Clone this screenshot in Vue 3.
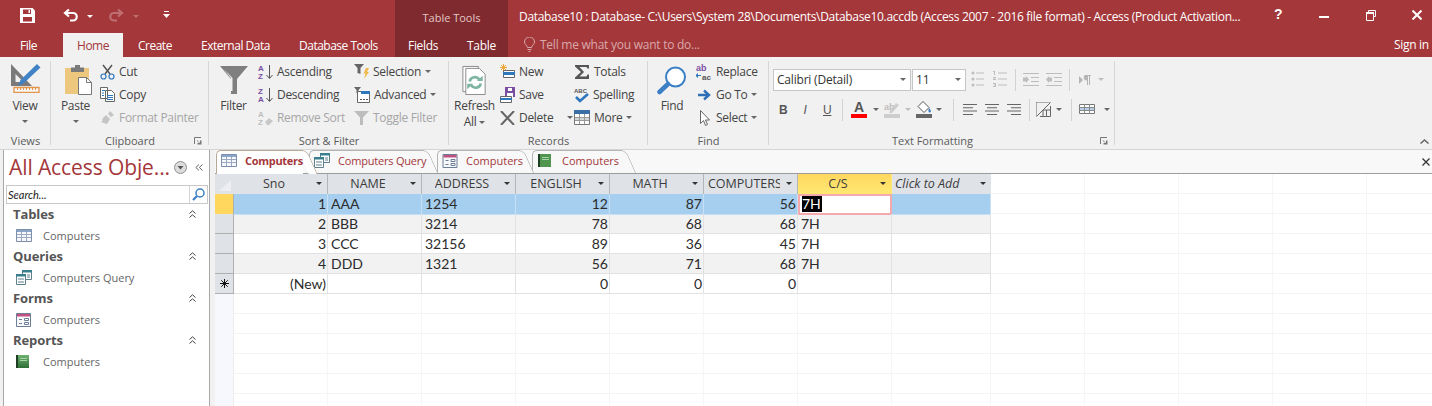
<script setup>
const columns = [
  { name: 'Sno' }, { name: 'NAME' }, { name: 'ADDRESS' }, { name: 'ENGLISH' }, { name: 'MATH' },
  { name: 'COMPUTERS', clip: true }, { name: 'C/S', active: true }, { name: 'Click to Add', add: true }
]
const rows = [
  { sno: 1, name: 'AAA', address: '1254', english: 12, math: 87, computers: 56, cs: '7H', current: true },
  { sno: 2, name: 'BBB', address: '3214', english: 78, math: 68, computers: 68, cs: '7H' },
  { sno: 3, name: 'CCC', address: '32156', english: 89, math: 36, computers: 45, cs: '7H' },
  { sno: 4, name: 'DDD', address: '1321', english: 56, math: 71, computers: 68, cs: '7H' }
]
</script>

<template>
  <div class="app">
    <header class="chrome">
      <div class="row-top">
        <div class="qat">
          <svg class="q-save" width="15" height="15" viewBox="0 0 15 15"><path fill="#fff" d="M0 0h12.500L15 2.500V15H0z"/><path fill="#a4373a" d="M3 1.500h8v4.500H3zM3 9h9v4.500H3z"/><path fill="#fff" d="M8.500 2h1.500v3H8.500z"/></svg>
          <svg class="q-undo" width="15" height="14" viewBox="0 0 15 14"><path fill="none" stroke="#fff" stroke-width="2.200" d="M6 1.500 2 5l4 3.500M2 5h8a3.600 3.600 0 0 1 0 7.500H7"/></svg>
          <i class="caret white q-c1"></i>
          <svg class="q-redo" width="15" height="14" viewBox="0 0 15 14"><path fill="none" stroke="#bf6f72" stroke-width="2.200" d="M9 1.500 13 5 9 8.500M13 5H5a3.600 3.600 0 0 0 0 7.500h3"/></svg>
          <i class="caret dim q-c2"></i>
          <svg class="q-more" width="7" height="8" viewBox="0 0 7 8"><path fill="#fff" d="M1 0h5v1H1zM0 3h7L3.500 7z"/></svg>
        </div>
        <div class="context context-title">Table Tools</div>
        <div class="doc-title">Database10 : Database- C:\Users\System 28\Documents\Database10.accdb (Access 2007 - 2016 file format) - Access (Product Activation...</div>
        <div class="win">
          <span class="help">?</span>
          <svg class="w-min" width="10" height="2" viewBox="0 0 10 2"><path fill="#fff" d="M0 0h10v2H0z"/></svg>
          <svg class="w-max" width="10" height="11" viewBox="0 0 10 11"><path fill="none" stroke="#fff" d="M2.500 2.500V.5h7v6H8M.5 2.500h7v8h-7z"/><path fill="#fff" d="M0 2h8v2H0z"/></svg>
          <svg class="w-close" width="10" height="10" viewBox="0 0 10 10"><path stroke="#fff" stroke-width="2" d="m.5.500 9 9m0-9-9 9"/></svg>
        </div>
      </div>
      <div class="row-tabs">
        <nav class="main-tabs">
          <span class="file">File</span>
          <span class="home">Home</span>
          <span class="create">Create</span>
          <span class="external">External Data</span>
          <span class="dbtools">Database Tools</span>
        </nav>
        <nav class="context context-tabs"><span>Fields</span><span>Table</span></nav>
        <div class="tell">
          <svg width="11" height="15" viewBox="0 0 11 15"><path fill="none" stroke="#d8a9ab" d="M3.500 10.500C3 8 .5 7.500.5 5a5 5 0 0 1 10 0c0 2.500-2.500 3-3 5.500zM3.500 12.500h4M4.500 14.500h2"/></svg>
          <span>Tell me what you want to do...</span>
        </div>
        <span class="signin">Sign in</span>
      </div>
    </header>

    <section class="ribbon">
      <div class="group g-views">
        <div class="group-body">
          <div class="big view">
            <svg width="32" height="30" viewBox="0 0 32 30"><path fill="#7a7a7a" fill-rule="evenodd" d="M2 1v22h21zM6.500 11v8h8z"/><path fill="#3f82c6" d="M28 1l3.500 3.500L15 20l-6 3 2.500-6z"/><path fill="#fff" d="M5 24.500h25v5H5z" opacity=".5"/><path fill="none" stroke="#e3954b" stroke-width="1.300" d="M5 24.500h25v5H5z"/><path stroke="#e3954b" d="M8.500 25v2M11.500 25v2M14.500 25v2M17.500 25v2M20.500 25v2M23.500 25v2M26.500 25v2"/></svg>
            <span class="big-label">View</span>
            <i class="caret big-caret"></i>
          </div>
        </div>
        <div class="group-label">Views</div>
      </div>

      <div class="group g-clip">
        <div class="group-body">
          <div class="big paste">
            <svg width="28" height="30" viewBox="0 0 28 30"><path fill="#eec77e" d="M1 3h24v26H1z"/><path fill="#7a7a7a" d="M7 2.500h4V0h5v2.500h4V7H7z"/><path fill="#fff" stroke="#777" d="M14.500 12.500h8l5 5v12h-13z"/><path fill="none" stroke="#777" d="M22.500 12.500v5h5"/></svg>
            <span class="big-label">Paste</span>
            <i class="caret big-caret"></i>
          </div>
          <div class="stack">
            <div class="small"><svg width="15" height="16" viewBox="0 0 15 16"><path stroke="#555" stroke-width="1.500" d="M3 1l7 9M12 1l-7 9"/><circle cx="3.500" cy="12.500" r="2.500" fill="none" stroke="#2f77bd" stroke-width="1.200"/><circle cx="11.500" cy="12.500" r="2.500" fill="none" stroke="#2f77bd" stroke-width="1.200"/></svg><span>Cut</span></div>
            <div class="small"><svg width="15" height="15" viewBox="0 0 15 15"><path fill="#fff" stroke="#666" d="M.5.500h7v11h-7zM5.500 3.500h6l3 3v8h-9z"/><path stroke="#2f77bd" d="M2 3.500h3M2 6h2M2 8.500h2M7 8.500h6M7 10.500h6M7 12.500h6"/></svg><span>Copy</span></div>
            <div class="small off"><svg width="15" height="15" viewBox="0 0 15 15"><path fill="#c4c4c4" d="M10 1l4 4-3 2-3-3zM6 5l4 4-3 5-6-2 2-2-1-1z"/></svg><span>Format Painter</span></div>
          </div>
        </div>
        <div class="group-label">Clipboard<svg class="launcher" width="8" height="8" viewBox="0 0 8 8"><path fill="none" stroke="#777" d="M.5 7V.5H7"/><path fill="#777" d="M3 3l3 3V3.500h1.500v4h-4V6h2L3 4z"/></svg></div>
      </div>

      <div class="group g-sort">
        <div class="group-body">
          <div class="big filter">
            <svg width="28" height="28" viewBox="0 0 28 28"><path fill="#7f7f7f" fill-rule="evenodd" d="M0 0h28L17 13v15h-6V13zM11 12v13h1.500V12L4 3z"/></svg>
            <span class="big-label">Filter</span>
          </div>
          <div class="stack s-sort1">
            <div class="small"><svg width="15" height="18" viewBox="0 0 15 18"><text x="0" y="8" class="az a">A</text><text x="0" y="16" class="az z">Z</text><path stroke="#555" fill="none" d="M11.500 2v13M8.500 12l3 3.500 3-3.500"/></svg><span>Ascending</span></div>
            <div class="small"><svg width="15" height="18" viewBox="0 0 15 18"><text x="0" y="8" class="az z">Z</text><text x="0" y="16" class="az a">A</text><path stroke="#555" fill="none" d="M11.500 2v13M8.500 12l3 3.500 3-3.500"/></svg><span>Descending</span></div>
            <div class="small off"><svg width="15" height="18" viewBox="0 0 15 18"><text x="0" y="8" class="az off-t">A</text><text x="0" y="16" class="az off-t">Z</text><path fill="#c8c8c8" d="M7 13l4-4 4 3-4 4H9z"/></svg><span>Remove Sort</span></div>
          </div>
          <div class="stack s-sort2">
            <div class="small"><svg width="15" height="15" viewBox="0 0 15 15"><path fill="#666" d="M0 0h10L6.500 4v6l-3-1V4z"/><path fill="#f0b94e" d="M12 4h3l-2 4h2l-5 7 1.500-5.500H9.500z"/></svg><span>Selection</span><i class="caret"></i></div>
            <div class="small"><svg width="16" height="16" viewBox="0 0 16 16"><path fill="#666" d="M0 0h7L4.500 3v4l-2-1V3z"/><path fill="#fff" stroke="#666" d="M3.500 4.500h12v11h-12z"/><path fill="#2f77bd" d="M7 4h9v3H7z"/><path fill="#555" d="M6 12h2v1H6zM9 12h2v1H9zM12 12h2v1h-2z"/></svg><span>Advanced</span><i class="caret"></i></div>
            <div class="small off"><svg width="15" height="15" viewBox="0 0 15 15"><path fill="#bdbdbd" d="M0 1h15L9 7.500V15H6V7.500z"/></svg><span>Toggle Filter</span></div>
          </div>
        </div>
        <div class="group-label">Sort &amp; Filter</div>
      </div>

      <div class="group g-rec">
        <div class="group-body">
          <div class="big refresh">
            <svg width="25" height="31" viewBox="0 0 25 31"><path fill="#fff" stroke="#8a8a8a" d="M.5 1.500h16v26H.5z"/><path fill="#fff" stroke="#8a8a8a" d="M3.500 3.500h14l6 6v21h-20z"/><path fill="none" stroke="#7db5a0" stroke-width="2.800" d="M7.500 17a5.500 5.500 0 0 1 10-2M19 19a5.500 5.500 0 0 1-10 2"/><path fill="#7db5a0" d="M15 16.500h6V11zM11 19.500H5V25z"/></svg>
            <span class="big-label">Refresh</span>
            <span class="big-label second">All<i class="caret"></i></span>
          </div>
          <div class="stack s-rec1">
            <div class="small"><svg width="15" height="15" viewBox="0 0 15 15"><path stroke="#eca63a" d="M3.500 0v7M0 3.500h7M1 1l5 5M6 1 1 6"/><path fill="#fff" stroke="#666" d="M3.500 6.500h11v7h-11z"/><path fill="#2f77bd" d="M3 8h12v3H3z"/></svg><span>New</span></div>
            <div class="small"><svg width="15" height="16" viewBox="0 0 15 16"><path fill="#7a4fa3" d="M5 0h10v10H5z"/><path fill="#fff" d="M8 1h4v3H8zM7 6h6v4H7z"/><path fill="#fff" stroke="#666" d="M.5 9.500h11v6H.5z"/><path fill="#2f77bd" d="M0 11h12v2H0z"/></svg><span>Save</span></div>
            <div class="small"><svg width="15" height="14" viewBox="0 0 15 14"><path stroke="#666" stroke-width="2" d="m1 0 13 14M14 0 1 14"/></svg><span>Delete</span><i class="caret del-caret"></i></div>
          </div>
          <div class="stack s-rec2">
            <div class="small"><svg width="16" height="14" viewBox="0 0 16 14"><path fill="#555" d="M1 0h14v3.500h-1.500L12.500 2H5.500L10 7 5.500 11.500h7l1-2H15V14H1v-1.500L7 7 1 1.500z"/></svg><span>Totals</span></div>
            <div class="small"><svg width="15" height="16" viewBox="0 0 15 16"><text x="0" y="6" class="abc">ABC</text><path fill="none" stroke="#2f77bd" stroke-width="2.600" d="m2 10 4 4 8-7"/></svg><span>Spelling</span></div>
            <div class="small"><svg width="16" height="15" viewBox="0 0 16 15"><path fill="#fff" stroke="#777" d="M.5.500h15v14H.5z"/><path fill="#3b6ea5" d="M0 0h16v4H0z"/><path fill="#d6d6d6" d="M1 8h14v2H1z"/><path stroke="#999" d="M5.500 4v10M10.500 4v10M1 7.500h14M1 10.500h14"/></svg><span>More</span><i class="caret"></i></div>
          </div>
        </div>
        <div class="group-label">Records</div>
      </div>

      <div class="group g-find">
        <div class="group-body">
          <div class="big find">
            <svg width="30" height="28" viewBox="0 0 30 28"><circle cx="18.500" cy="11" r="9.500" fill="#fff" stroke="#3b7fc4" stroke-width="2"/><path stroke="#3b7fc4" stroke-width="4.500" stroke-linecap="round" d="M11 18 2.500 26"/></svg>
            <span class="big-label">Find</span>
          </div>
          <div class="stack s-find">
            <div class="small"><svg width="16" height="18" viewBox="0 0 16 18"><text x="0" y="8" class="ab">ab</text><text x="6" y="17" class="ac">ac</text><path fill="#2f77bd" d="M0 12h3v-2l3 2.500-3 2.500v-2H0z" transform="matrix(-1 0 0 1 5 0)"/></svg><span>Replace</span></div>
            <div class="small"><svg width="16" height="14" viewBox="0 0 16 14"><path fill="none" stroke="#2f6fb5" stroke-width="2.400" d="M2 7h11M8 2.500 13 7l-5 4.500"/></svg><span>Go To</span><i class="caret"></i></div>
            <div class="small"><svg width="16" height="16" viewBox="0 0 16 16"><path fill="#fff" stroke="#666" d="M4.500.5v13l3-3 2 5 2-1-2-4.500h4z"/></svg><span>Select</span><i class="caret"></i></div>
          </div>
        </div>
        <div class="group-label">Find</div>
      </div>

      <div class="group g-text">
        <div class="group-body">
          <div class="fmt">
            <div class="fmt-row">
              <div class="combo font"><span>Calibri (Detail)</span><i class="caret"></i></div>
              <div class="combo size"><span>11</span><i class="caret"></i></div>
              <svg class="t-bul" width="36" height="18" viewBox="0 0 36 18"><g fill="#bdbdbd"><circle cx="2" cy="3" r="1.500"/><circle cx="2" cy="9" r="1.500"/><circle cx="2" cy="15" r="1.500"/><path d="M5 2.500h8v1H5zM5 8.500h8v1H5zM5 14.500h8v1H5zM27 2.500h9v1h-9zM27 8.500h9v1h-9zM27 14.500h9v1h-9z"/><path d="M22 1h2v4h-1V2h-1zM22 7h3v1l-2 1h2v1h-3V9l2-1h-2zM22 13h3v4h-3v-1h2v-.5h-1v-1h1V14h-2z"/></g></svg>
              <i class="sep s1"></i>
              <svg class="t-ind" width="39" height="13" viewBox="0 0 39 13"><g fill="#bdbdbd"><path d="M0 0h16v1H0zM8 4h8v1H8zM8 8h8v1H8zM0 12h16v1H0zM0 4.500h3V3l3 3.500L3 10V8.500H0zM23 0h16v1H23zM31 4h8v1h-8zM31 8h8v1h-8zM23 12h16v1H23zM29 4.500h-3V3l-3 3.500L26 10V8.500h3z"/></g></svg>
              <i class="sep s2"></i>
              <svg class="t-para" width="12" height="10" viewBox="0 0 12 10"><path fill="#b5b5b5" d="M0 1l4 4-4 4zM6 0h6v1h-1v9h-1V1H9v9H8V5.500a3 3 0 0 1-2-5.500z"/></svg>
              <i class="caret faint t-pc"></i>
            </div>
            <div class="fmt-row r2">
              <b class="t-b">B</b><em class="t-i">I</em><u class="t-u">U</u>
              <i class="sep s3"></i>
              <span class="t-a">A<i class="redbar"></i></span>
              <i class="caret t-c1"></i>
              <svg class="t-hl" width="16" height="20" viewBox="0 0 16 20"><text x="0" y="10" class="hl">ab</text><path fill="#c8c8c8" d="M6 11l6-8 3 2-7 8H5zM0 14h16v4H0z" opacity=".85"/></svg>
              <i class="caret faint t-c2"></i>
              <svg class="t-fill" width="16" height="17" viewBox="0 0 16 17"><path fill="#fff" stroke="#555" d="M7 .5l6 6-5 5-6-6z"/><path fill="#2f77bd" d="M13 7c2 2 2.500 4 1 4.500s-2-2-1-4.500z"/><path fill="#666" d="M0 13h16v4H0z"/></svg>
              <i class="caret t-c3"></i>
              <i class="sep s4"></i>
              <svg class="t-al" width="58" height="11" viewBox="0 0 58 11"><path fill="#666" d="M0 0h14v1H0zM0 3.300h10v1H0zM0 6.600h14v1H0zM0 9.900h10v1H0zM22 0h14v1H22zM24 3.300h10v1H24zM22 6.600h14v1H22zM24 9.900h10v1H24zM44 0h14v1H44zM48 3.300h10v1H48zM44 6.600h14v1H44zM48 9.900h10v1H48z"/></svg>
              <i class="sep s5"></i>
              <svg class="t-grid" width="15" height="15" viewBox="0 0 15 15"><path fill="none" stroke="#666" stroke-dasharray="1 1" d="M.5.500h14M.5.500v14"/><path fill="none" stroke="#666" d="M.5 14.500 14.500.5M14.500 4v10.500H4M7 14V8h7M10.500 8v6"/></svg>
              <i class="caret t-c4"></i>
              <i class="sep s6"></i>
              <svg class="t-tb" width="16" height="10" viewBox="0 0 16 10"><path fill="#fff" stroke="#777" d="M.5.500h15v9H.5z"/><path fill="#b7cfe8" d="M1 4h14v2H1z"/><path stroke="#888" d="M5.500 0v10M10.500 0v10M0 3.500h16M0 6.500h16"/></svg>
              <i class="caret t-c5"></i>
            </div>
          </div>
        </div>
        <div class="group-label tf-label">Text Formatting<svg class="launcher" width="8" height="8" viewBox="0 0 8 8"><path fill="none" stroke="#777" d="M.5 7V.5H7"/><path fill="#777" d="M3 3l3 3V3.500h1.500v4h-4V6h2L3 4z"/></svg></div>
      </div>

      <svg class="collapse" width="9" height="5" viewBox="0 0 9 5"><path fill="none" stroke="#666" stroke-width="1.500" d="M.5 4.500l4-3.500 4 3.500"/></svg>
    </section>

    <main class="work">
      <aside class="nav">
        <div class="nav-head">
          <span class="nav-title">All Access Obje...</span>
          <svg class="nav-drop" width="13" height="13" viewBox="0 0 13 13"><circle cx="6.500" cy="6.500" r="6" fill="#dcdcdc" stroke="#8f8f8f"/><path fill="#555" d="M3.500 5h6l-3 3.500z"/></svg>
          <svg class="nav-shut" width="8" height="7" viewBox="0 0 8 7"><path fill="none" stroke="#666" d="M4 .5.800 3.500 4 6.500M7.500.5 4.300 3.500l3.200 3"/></svg>
        </div>
        <div class="search">
          <span>Search...</span>
          <div class="search-btn"><svg width="13" height="13" viewBox="0 0 13 13"><circle cx="8" cy="5" r="4" fill="none" stroke="#3b7fc4" stroke-width="1.500"/><path stroke="#3b7fc4" stroke-width="2.200" d="M5 8 1 12"/></svg></div>
        </div>

        <div class="nav-group"><b>Tables</b><svg class="chev" width="7" height="8" viewBox="0 0 7 8"><path fill="none" stroke="#444" d="M.5 3.500 3.500.8l3 2.700M.5 7.500l3-2.700 3 2.700"/></svg></div>
        <div class="nav-item">
          <svg width="16" height="13" viewBox="0 0 16 13"><path fill="#f5f7fb" stroke="#7d8fa8" d="M.5.500h15v12H.5z"/><path fill="#8aa5c8" d="M1 1h14v2H1z"/><path stroke="#9aa9bf" d="M5.500 3v9M10.500 3v9M1 5.500h14M1 8.500h14"/></svg>
          <span>Computers</span>
        </div>
        <div class="nav-group"><b>Queries</b><svg class="chev" width="7" height="8" viewBox="0 0 7 8"><path fill="none" stroke="#444" d="M.5 3.500 3.500.8l3 2.700M.5 7.500l3-2.700 3 2.700"/></svg></div>
        <div class="nav-item">
          <svg width="16" height="15" viewBox="0 0 16 15"><path fill="#fff" stroke="#5f7f8f" d="M6.500.5h9v9h-9z"/><path fill="#3a7f8e" d="M6 0h10v2.500H6z"/><path fill="#fff" stroke="#5f7f8f" d="M.5 4.500h9v10h-9z"/><path fill="#3a7f8e" d="M0 4h10v2.500H0z"/><path stroke="#5f7f8f" d="M2 9h6M2 12h6M11 5h3M11 7h3"/></svg>
          <span>Computers Query</span>
        </div>
        <div class="nav-group"><b>Forms</b><svg class="chev" width="7" height="8" viewBox="0 0 7 8"><path fill="none" stroke="#444" d="M.5 3.500 3.500.8l3 2.700M.5 7.500l3-2.700 3 2.700"/></svg></div>
        <div class="nav-item">
          <svg width="15" height="14" viewBox="0 0 15 14"><path fill="#f7f8fb" stroke="#6d7f96" d="M.5.500h14v13H.5z"/><path fill="#c0507f" d="M1 1h13v2.500H1z"/><path stroke="#6d7f96" d="M3 6.500h3M3 10.500h3"/><path fill="#fff" stroke="#6d7f96" d="M8.500 5.500h4v2h-4zM8.500 9.500h4v2h-4z"/></svg>
          <span>Computers</span>
        </div>
        <div class="nav-group"><b>Reports</b><svg class="chev" width="7" height="8" viewBox="0 0 7 8"><path fill="none" stroke="#444" d="M.5 3.500 3.500.8l3 2.700M.5 7.500l3-2.700 3 2.700"/></svg></div>
        <div class="nav-item">
          <svg width="13" height="13" viewBox="0 0 13 13"><defs><linearGradient id="rep" x1="0" x2="0" y1="0" y2="1"><stop offset="0" stop-color="#6fb26f"/><stop offset="1" stop-color="#2f6e37"/></linearGradient></defs><path fill="url(#rep)" d="M0 0h13v13H0z"/><path fill="#1e3d22" d="M0 0h2v13H0z"/><path fill="#a6d4a6" d="M4 3h7v1H4zM4 5h7v1H4z"/></svg>
          <span>Computers</span>
        </div>
      </aside>

      <div class="doc">
        <div class="doc-tabs">
          <div class="tab active t1">
            <svg width="16" height="13" viewBox="0 0 16 13"><path fill="#f5f7fb" stroke="#7d8fa8" d="M.5.500h15v12H.5z"/><path fill="#8aa5c8" d="M1 1h14v2H1z"/><path stroke="#9aa9bf" d="M5.500 3v9M10.500 3v9M1 5.500h14M1 8.500h14"/></svg>
            <span>Computers</span>
          </div>
          <div class="tab t2">
            <svg width="16" height="15" viewBox="0 0 16 15"><path fill="#fff" stroke="#5f7f8f" d="M6.500.5h9v9h-9z"/><path fill="#3a7f8e" d="M6 0h10v2.500H6z"/><path fill="#fff" stroke="#5f7f8f" d="M.5 4.500h9v10h-9z"/><path fill="#3a7f8e" d="M0 4h10v2.500H0z"/><path stroke="#5f7f8f" d="M2 9h6M2 12h6M11 5h3M11 7h3"/></svg>
            <span>Computers Query</span>
          </div>
          <div class="tab t3">
            <svg width="16" height="14" viewBox="0 0 15 14"><path fill="#f7f8fb" stroke="#6d7f96" d="M.5.500h14v13H.5z"/><path fill="#c0507f" d="M1 1h13v2.500H1z"/><path stroke="#6d7f96" d="M3 6.500h3M3 10.500h3"/><path fill="#fff" stroke="#6d7f96" d="M8.500 5.500h4v2h-4zM8.500 9.500h4v2h-4z"/></svg>
            <span>Computers</span>
          </div>
          <div class="tab t4">
            <svg width="13" height="13" viewBox="0 0 13 13"><path fill="#4f9550" d="M0 0h13v13H0z"/><path fill="#1e3d22" d="M0 0h2v13H0z"/><path fill="#a6d4a6" d="M4 3h7v1H4zM4 5h7v1H4z"/></svg>
            <span>Computers</span>
          </div>
          <svg class="doc-close" width="8" height="8" viewBox="0 0 8 8"><path stroke="#333" stroke-width="1.300" d="m.5.500 7 7m0-7-7 7"/></svg>
        </div>

        <div class="sheet">
          <div class="grid-row head">
            <div class="sel corner"><svg width="17" height="17" viewBox="0 0 17 17"><path fill="#eceef1" d="M3 15 15 4v11z"/></svg></div>
            <div v-for="c in columns" :key="c.name" class="hcell" :class="{ on: c.active, add: c.add }">
              <span class="hname" :class="{ clip: c.clip }">{{ c.name }}</span>
              <i class="caret dark"></i>
            </div>
          </div>
          <div v-for="(r, i) in rows" :key="r.sno" class="grid-row data" :class="{ current: r.current, alt: i % 2 === 1 }">
            <div class="sel"></div>
            <div class="cell num">{{ r.sno }}</div>
            <div class="cell">{{ r.name }}</div>
            <div class="cell">{{ r.address }}</div>
            <div class="cell num">{{ r.english }}</div>
            <div class="cell num">{{ r.math }}</div>
            <div class="cell num">{{ r.computers }}</div>
            <div class="cell cs"><span>{{ r.cs }}</span></div>
            <div class="cell"></div>
          </div>
          <div class="grid-row data newrow">
            <div class="sel"><svg width="9" height="9" viewBox="0 0 9 9"><path stroke="#111" d="M4.500 0v9M0 4.500h9M1.300 1.300l6.400 6.400M7.700 1.300 1.300 7.700"/></svg></div>
            <div class="cell num">(New)</div>
            <div class="cell"></div>
            <div class="cell"></div>
            <div class="cell num">0</div>
            <div class="cell num">0</div>
            <div class="cell num">0</div>
            <div class="cell"></div>
            <div class="cell"></div>
          </div>
        </div>
      </div>
    </main>
  </div>
</template>

<style>
html, body { margin: 0; background: #fff; }
</style>

<style scoped>
.app { width: 1432px; height: 406px; overflow: hidden; font-family: "Open Sans", "Noto Sans", sans-serif; font-size: 12px; letter-spacing: -.3px; color: #444; display: flex; flex-direction: column; }
.chrome { background: #a4373a; color: #fff; height: 57px; flex: none; }
.row-top { height: 32px; display: flex; }
.row-tabs { height: 25px; display: flex; }
.qat { width: 395px; flex: none; display: flex; align-items: center; }
.q-save { margin-left: 20px; margin-top: -1px; }
.q-undo { margin-left: 28px; margin-top: -2px; }
.q-c1 { margin-left: 9px; }
.q-redo { margin-left: 16px; margin-top: -2px; }
.q-c2 { margin-left: 9px; }
.q-more { margin-left: 24px; margin-top: -2px; }
.context { width: 113px; flex: none; background: #7f2a2e; }
.context-title { line-height: 35px; text-align: center; color: #e3c6c7; font-size: 11px; letter-spacing: 0; }
.doc-title { margin-left: 11px; line-height: 33px; white-space: nowrap; width: 740px; flex: none; letter-spacing: -.31px; }
.win { position: relative; flex: 1; }
.help { position: absolute; left: 15px; top: 6px; font-weight: 700; font-size: 14px; font-family: "Liberation Sans", sans-serif; }
.w-min { position: absolute; left: 60px; top: 16px; }
.w-max { position: absolute; left: 107px; top: 10px; }
.w-close { position: absolute; left: 153px; top: 10px; }
.main-tabs { width: 395px; flex: none; display: flex; line-height: 27px; white-space: nowrap; letter-spacing: -.5px; }
.file { margin-left: 20px; width: 43px; }
.home { width: 60px; background: #f1f1f1; color: #a4373a; text-align: center; margin-top: 1px; line-height: 26px; }
.create { margin-left: 15px; width: 63px; }
.external { width: 98px; }
.context-tabs { display: flex; line-height: 27px; }
.context-tabs span:first-child { margin-left: 13px; width: 59px; }
.tell { display: flex; align-items: center; margin-left: 16px; color: #d8a9ab; width: 870px; flex: none; gap: 5px; letter-spacing: -.25px; }
.signin { line-height: 26px; white-space: nowrap; }
.caret { display: inline-block; width: 0; height: 0; border-left: 3px solid transparent; border-right: 3px solid transparent; border-top: 3px solid #666; vertical-align: middle; }
.caret.white { border-top-color: #fff; }
.caret.dim { border-top-color: #bf6f72; }
.caret.faint { border-top-color: #bdbdbd; }
.caret.dark { border-top-color: #333; }

.ribbon { height: 93px; flex: none; background: #f1f1f1; border-bottom: 1px solid #d4d4d4; box-sizing: border-box; display: flex; position: relative; }
.group { display: flex; flex-direction: column; flex: none; box-sizing: border-box; padding-top: 3px; position: relative; }
.group::after { content: ""; position: absolute; right: 0; top: 4px; height: 84px; width: 1px; background: #d6d6d6; }
.group-body { display: flex; height: 73px; }
.group-label { height: 15px; text-align: center; line-height: 16px; font-size: 11px; letter-spacing: 0; color: #5a5a5a; position: relative; }
.tf-label { padding-right: 19px; }
.launcher { position: absolute; right: 7px; top: 4px; }
.big { display: flex; flex-direction: column; align-items: center; flex: none; }
.big > svg { height: 30px; margin-top: 5px; flex: none; }
.view > svg { margin-top: 3px; margin-bottom: 2px; }
.paste > svg { margin-left: 4px; }
.big-label { line-height: 16px; margin-top: 3px; white-space: nowrap; }
.big-label.second { margin-top: 0; }
.big-label .caret { margin-left: 3px; }
.big-caret { margin-top: 6px; }
.g-views { width: 51px; }
.g-views .big { width: 50px; }
.g-clip { width: 158px; }
.paste { width: 49px; }
.g-sort { width: 240px; }
.filter { width: 49px; }
.s-sort1 { width: 96px; }
.g-rec { width: 199px; }
.refresh { width: 51px; }
.s-rec1 { width: 74px; }
.g-find { width: 121px; }
.find { width: 48px; }
.g-text { width: 346px; }
.stack { display: flex; flex-direction: column; flex: none; }
.small { height: 23px; display: flex; align-items: center; gap: 4px; white-space: nowrap; }
.small svg { flex: none; }
.off { color: #a6a6a6; }
.del-caret { margin-left: 10px; }
.az { font: 700 8px "Liberation Sans", sans-serif; letter-spacing: 0; }
.az.a { fill: #7a4fa3; }
.az.z { fill: #7a4fa3; }
.az.off-t { fill: #bdbdbd; }
.abc { font: 700 6px "Liberation Sans", sans-serif; fill: #555; letter-spacing: 0; }
.ab { font: 700 9px "Liberation Sans", sans-serif; fill: #7a4fa3; letter-spacing: 0; }
.ac { font: 700 8px "Liberation Sans", sans-serif; fill: #555; letter-spacing: 0; }
.hl { font: 700 9px "Liberation Sans", sans-serif; fill: #bdbdbd; letter-spacing: 0; }

.fmt { display: flex; flex-direction: column; padding: 8px 0 0 4px; }
.fmt-row { display: flex; align-items: center; height: 23px; position: relative; width: 340px; }
.r2 { margin-top: 7px; }
.combo { height: 22px; box-sizing: border-box; background: #fff; border: 1px solid #c6c6c6; display: flex; align-items: center; justify-content: space-between; padding: 0 4px 0 3px; font-size: 12px; letter-spacing: -.2px; color: #333; flex: none; }
.font { width: 138px; }
.size { width: 54px; margin-left: 1px; }
.t-bul { margin-left: 5px; margin-top: -1px; }
.sep { width: 1px; height: 22px; background: #d2d2d2; flex: none; display: block; }
.s1 { margin-left: 8px; }
.t-ind { margin-left: 7px; }
.s2 { margin-left: 7px; }
.t-para { margin-left: 9px; }
.t-pc { margin-left: 7px; }
.r2 b, .r2 em, .r2 u { font-family: "Liberation Sans", sans-serif; font-size: 12px; color: #555; width: 8px; text-align: center; }
.t-b { margin-left: 6px; }
.t-i { margin-left: 14px; }
.t-u { margin-left: 14px; }
.s3 { margin-left: 11px; }
.t-a { margin-left: 8px; position: relative; width: 16px; text-align: center; font: 700 14px/14px "Liberation Sans", sans-serif; margin-top: -5px; color: #555; }
.redbar { position: absolute; left: 0; top: 14px; width: 16px; height: 4px; background: #f00; }
.t-c1 { margin-left: 6px; }
.t-hl { margin-left: 5px; }
.t-c2 { margin-left: 5px; }
.t-fill { margin-left: 5px; }
.t-c3 { margin-left: 4px; }
.s4 { margin-left: 11px; }
.t-al { margin-left: 9px; }
.s5 { margin-left: 8px; }
.t-grid { margin-left: 6px; }
.t-c4 { margin-left: 5px; }
.s6 { margin-left: 9px; }
.t-tb { margin-left: 7px; margin-top: -2px; }
.t-c5 { margin-left: 9px; }
.collapse { position: absolute; right: 3px; bottom: 5px; }

.work { flex: 1; display: flex; min-height: 0; background: #f1f1f1; }
.nav { width: 205px; margin-left: 3px; flex: none; background: #fff; border-left: 1px solid #a8a8a8; border-right: 1px solid #a8a8a8; color: #555; }
.nav-head { height: 35px; display: flex; align-items: center; position: relative; }
.nav-title { color: #a4373a; font-size: 21px; letter-spacing: -.1px; margin-left: 5px; white-space: nowrap; line-height: 35px; }
.nav-drop { position: absolute; left: 170px; top: 11px; }
.nav-shut { position: absolute; left: 191px; top: 14px; }
.search { height: 17px; margin: 0 2px; border: 1px solid #c8c8c8; display: flex; align-items: center; justify-content: space-between; font-family: Lato, sans-serif; font-style: italic; font-size: 11px; letter-spacing: 0; color: #222; padding: 0 0 0 1px; width: 199px; }
.search-btn { width: 17px; height: 17px; border-left: 1px solid #d4d4d4; display: flex; align-items: center; justify-content: center; }
.nav-group { height: 21px; box-sizing: border-box; padding: 0 13px 2px 9px; display: flex; align-items: center; justify-content: space-between; }
.nav-group b { font-weight: 700; font-size: 13px; letter-spacing: -.1px; color: #555; }
.chev { flex: none; }
.nav-item { height: 21px; display: flex; align-items: center; font-size: 11px; letter-spacing: 0; color: #666; padding-left: 12px; }
.nav-item svg { flex: none; }
.nav-item span { position: absolute; margin-left: 27px; }
.doc { margin-left: 5px; flex: 1; min-width: 0; display: flex; flex-direction: column; background: #fff; }
.doc-tabs { height: 24px; box-sizing: border-box; background: #f8f8f8; border-bottom: 1px solid #9c9c9c; display: flex; align-items: flex-end; padding-left: 1px; position: relative; color: #a4373a; font-size: 11px; letter-spacing: 0; }
.tab { height: 23px; position: relative; display: flex; align-items: center; gap: 8px; padding: 0 0 3px 4px; box-sizing: border-box; border: 1px solid #b4b4b4; border-bottom: 0; border-right: 0; border-radius: 5px 0 0 0; white-space: nowrap; background: #f8f8f8; }
.tab svg { flex: none; }
.tab::after { content: ""; position: absolute; top: -1px; right: -4px; bottom: 0; width: 8px; background: inherit; border: 1px solid #b4b4b4; border-left: 0; border-bottom: 0; border-radius: 0 6px 0 0; transform: skewX(24deg); transform-origin: top; }
.tab > * { position: relative; z-index: 1; }
.active { background: #fff; font-weight: 700; letter-spacing: -.3px; z-index: 4; height: 24px; margin-bottom: -1px; padding-bottom: 4px; border-color: #b9a897; }
.active::after { border-color: #b9a897; }
.t1 { width: 87px; }
.t2 { width: 115px; margin-left: 6px; letter-spacing: -.2px; z-index: 3; }
.t3 { width: 83px; margin-left: 13px; z-index: 2; }
.t4 { width: 90px; margin-left: 12px; gap: 11px; padding-left: 5px; z-index: 1; }
.doc-close { position: absolute; right: 2px; top: 8px; }

.sheet { flex: 1; min-height: 0; font-family: Lato, sans-serif; font-size: 14px; letter-spacing: 0; color: #2b2b2b;
  background-color: #fff;
  background-image:
    linear-gradient(90deg, #f6f8fd 18px, #ececec 18px, #ececec 19px, transparent 19px),
    repeating-linear-gradient(90deg, transparent 0 93px, #f6f6f6 93px 94px),
    repeating-linear-gradient(90deg, #f6f6f6 0 1px, transparent 1px 94px),
    repeating-linear-gradient(180deg, transparent 0 19px, #f4f4f4 19px 20px);
  background-position: 0 0, 19px 0, 775px 0, 0 0;
  background-size: 19px 100%, 700px 100%, 100% 100%, 100% 100%;
  background-repeat: no-repeat, no-repeat, no-repeat, repeat;
}
.grid-row { display: grid; grid-template-columns: 19px repeat(7, 94px) 99px; height: 20px; width: 776px; }
.head { background: #dfe2e6; height: 20px; }
.sel { background: #dfe2e6; border-right: 1px solid #b0b0b0; border-bottom: 1px solid #b0b0b0; box-sizing: border-box; display: flex; align-items: center; justify-content: center; }
.corner { border: 0; padding: 0; overflow: hidden; border-right: 1px solid #dfe2e6; }
.hcell { position: relative; box-sizing: border-box; border-right: 1px solid #b4b7ba; height: 20px; font-family: "Open Sans", sans-serif; font-size: 12.5px; line-height: 19px; text-align: center; padding-right: 13px; color: #3c3c3c; background: #dfe2e6; white-space: nowrap; }
.hcell .caret { position: absolute; right: 5px; top: 8px; }
.hname { display: inline-block; overflow: hidden; vertical-align: top; }
.hname.clip { width: 72px; text-align: left; margin-left: 0; }
.hcell.on { background: linear-gradient(#ffd75e, #ffe873); border-right-color: #ffe873; }
.hcell.add { font-style: italic; text-align: left; padding-left: 3px; border-right: 0; }
.data { background: #fff; }
.data.alt { background: #f2f2f2; }
.data.current { background: #a6cfef; }
.current .sel { background: #ffd75e; }
.cell { box-sizing: border-box; border-right: 1px solid #e2e2e2; border-bottom: 1px solid #e2e2e2; padding: 0 1px 0 3px; line-height: 20px; white-space: nowrap; overflow: hidden; }
.num { text-align: right; }
.current .cell { border-color: #c8e0f4; }
.current .cs { background: #fff; border: 2px solid #f4a9ad; line-height: 16px; padding-left: 2px; height: 21px; }
.current .cs span { background: #000; color: #fff; display: inline-block; padding: 0 1px 0 0; }
</style>
